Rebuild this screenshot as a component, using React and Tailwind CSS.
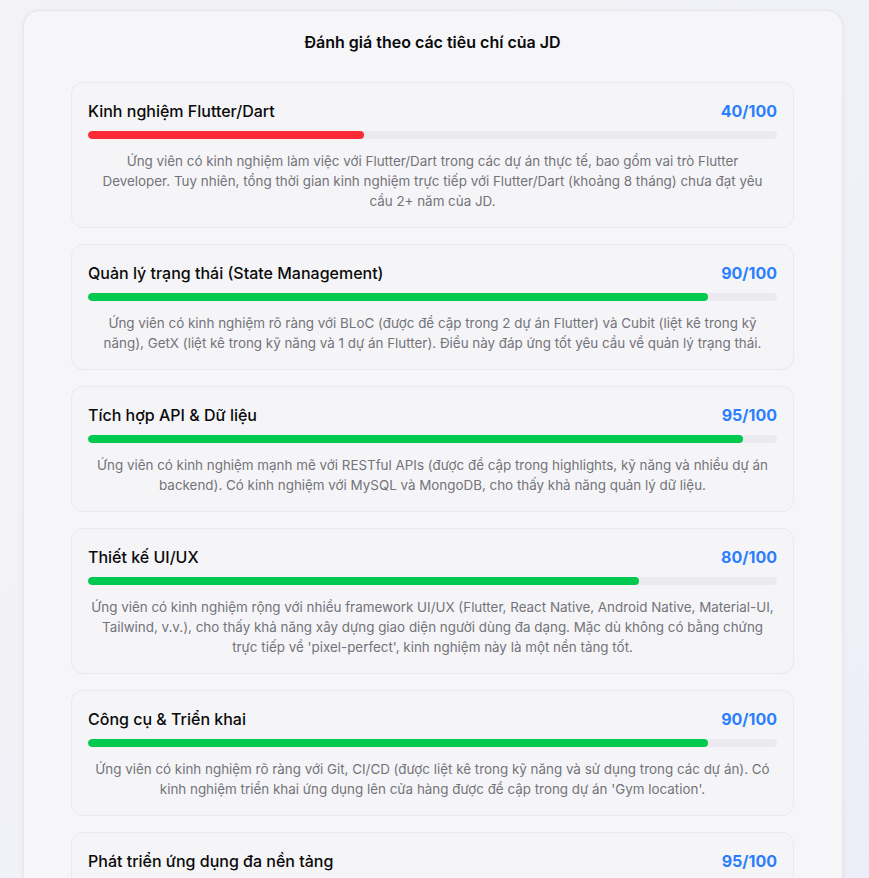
import React from 'react';

const criteria = [
    {
        title: 'Kinh nghiệm Flutter/Dart',
        score: 40,
        text: 'Ứng viên có kinh nghiệm làm việc với Flutter/Dart trong các dự án thực tế, bao gồm vai trò Flutter\nDeveloper. Tuy nhiên, tổng thời gian kinh nghiệm trực tiếp với Flutter/Dart (khoảng 8 tháng) chưa đạt yêu\ncầu 2+ năm của JD.',
    },
    {
        title: 'Quản lý trạng thái (State Management)',
        score: 90,
        text: 'Ứng viên có kinh nghiệm rõ ràng với BLoC (được đề cập trong 2 dự án Flutter) và Cubit (liệt kê trong kỹ năng), GetX (liệt kê trong kỹ năng và 1 dự án Flutter). Điều này đáp ứng tốt yêu cầu về quản lý trạng thái.',
    },
    {
        title: 'Tích hợp API & Dữ liệu',
        score: 95,
        text: 'Ứng viên có kinh nghiệm mạnh mẽ với RESTful APIs (được đề cập trong highlights, kỹ năng và nhiều dự án backend). Có kinh nghiệm với MySQL và MongoDB, cho thấy khả năng quản lý dữ liệu.',
    },
    {
        title: 'Thiết kế UI/UX',
        score: 80,
        text: "Ứng viên có kinh nghiệm rộng với nhiều framework UI/UX (Flutter, React Native, Android Native, Material-UI, Tailwind, v.v.), cho thấy khả năng xây dựng giao diện người dùng đa dạng. Mặc dù không có bằng chứng trực tiếp về 'pixel-perfect', kinh nghiệm này là một nền tảng tốt.",
    },
    {
        title: 'Công cụ & Triển khai',
        score: 90,
        text: "Ứng viên có kinh nghiệm rõ ràng với Git, CI/CD (được liệt kê trong kỹ năng và sử dụng trong các dự án). Có kinh nghiệm triển khai ứng dụng lên cửa hàng được đề cập trong dự án 'Gym location'.",
    },
    {
        title: 'Phát triển ứng dụng đa nền tảng',
        score: 95,
        text: 'Ứng viên có kinh nghiệm phát triển ứng dụng trên nhiều nền tảng với Flutter và React Native, bao gồm cả Android và iOS.',
    },
];

const CriterionCard = ({ title, score, text }) => (
    <div className="rounded-xl border border-[#e9e9ee] bg-[#f5f5f8] px-4 pt-4 pb-4">
        <div className="flex items-center justify-between mb-2">
            <h3 className="text-[16px] leading-6 font-medium text-[#0a0a0a]">{title}</h3>
            <span className="text-[16px] leading-6 font-bold text-[#2b7fff]">{score}/100</span>
        </div>
        <div className="h-2 w-full rounded-full bg-[#ebebef] overflow-hidden">
            <div
                className={score < 50 ? 'h-full rounded-full bg-[#fb2c36]' : 'h-full rounded-full bg-[#00c950]'}
                style={{ width: `${score}%` }}
            />
        </div>
        <p className="mt-3 text-center text-[13.4px] leading-5 text-[#737379] whitespace-pre-line">{text}</p>
    </div>
);

export default function App() {
    return (
        <div
            className="min-h-screen bg-gradient-to-br from-[#f3f3f7] via-[#f1f2f7] to-[#eceef8] pt-[10px] pl-[23px] pr-[26px] pb-10"
            style={{ fontFamily: 'Inter, "Noto Sans", sans-serif' }}
        >
            <div className="rounded-2xl border border-[#e6e6eb] bg-[#f6f6f9] shadow-[0_1px_6px_rgba(0,0,0,0.05)] pl-[47px] pr-12 pt-[20px] pb-12">
                <h2 className="text-center text-[16px] leading-[22px] font-semibold text-[#0a0a0a] mb-[29px]">
                    Đánh giá theo các tiêu chí của JD
                </h2>
                <div className="flex flex-col gap-4">
                    {criteria.map((c) => (
                        <CriterionCard key={c.title} {...c} />
                    ))}
                </div>
            </div>
        </div>
    );
}
